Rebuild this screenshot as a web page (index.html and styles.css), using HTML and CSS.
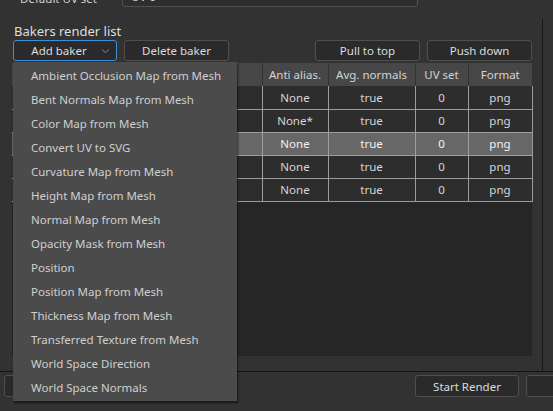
FILE: index.html
```html
<!DOCTYPE html>
<html>
<head>
<meta charset="utf-8">
<link rel="stylesheet" href="styles.css">
</head>
<body>
<div class="app">
  <div class="uvrow">
    <span class="uvlabel">Default UV set</span>
    <div class="combo"><span>UV 0</span><span class="combo-arrow"></span></div>
  </div>
  <div class="main">
    <div class="panel">
      <div class="title">Bakers render list</div>
      <div class="btnrow">
        <div class="btn btn-focus">Add baker<svg class="chev" width="9" height="6" viewBox="0 0 9 6"><path d="M1 1.5 L4.5 4.5 L8 1.5" fill="none" stroke="#8a8a8a" stroke-width="1"/></svg></div>
        <div class="btn">Delete baker</div>
        <div class="spacer"></div>
        <div class="btn">Pull to top</div>
        <div class="btn">Push down</div>
      </div>
      <div class="tablebox">
        <table class="grid">
          <thead>
            <tr><th class="c1"></th><th class="c2"></th><th class="c3">Anti alias.</th><th class="c4">Avg. normals</th><th class="c5">UV set</th><th class="c6">Format</th></tr>
          </thead>
          <tbody>
            <tr><td></td><td></td><td>None</td><td>true</td><td>0</td><td>png</td></tr>
            <tr><td></td><td></td><td>None*</td><td>true</td><td>0</td><td>png</td></tr>
            <tr class="sel"><td></td><td></td><td>None</td><td>true</td><td>0</td><td>png</td></tr>
            <tr><td></td><td></td><td>None</td><td>true</td><td>0</td><td>png</td></tr>
            <tr><td></td><td></td><td>None</td><td>true</td><td>0</td><td>png</td></tr>
          </tbody>
        </table>
      </div>
    </div>
    <div class="vline"></div>
  </div>
  <div class="bottombar">
    <div class="btn btn-left"></div>
    <div class="spacer"></div>
    <div class="btn btn-bottom">Start Render</div>
    <div class="btn btn-bottom btn-cut"></div>
  </div>

  <div class="menu">
    <div class="item">Ambient Occlusion Map from Mesh</div>
    <div class="item">Bent Normals Map from Mesh</div>
    <div class="item">Color Map from Mesh</div>
    <div class="item">Convert UV to SVG</div>
    <div class="item">Curvature Map from Mesh</div>
    <div class="item">Height Map from Mesh</div>
    <div class="item">Normal Map from Mesh</div>
    <div class="item">Opacity Mask from Mesh</div>
    <div class="item">Position</div>
    <div class="item">Position Map from Mesh</div>
    <div class="item">Thickness Map from Mesh</div>
    <div class="item">Transferred Texture from Mesh</div>
    <div class="item">World Space Direction</div>
    <div class="item">World Space Normals</div>
  </div>
</div>
</body>
</html>
```

FILE: styles.css
```css
* { box-sizing: border-box; }
html, body {
  margin: 0;
  padding: 0;
  background: #323232;
  width: 553px;
  height: 411px;
  overflow: hidden;
}
body {
  font-family: "Noto Sans", "Open Sans", sans-serif;
  font-size: 11.5px;
  color: #d6d6d6;
}
.app {
  position: relative;
  width: 553px;
  height: 411px;
  overflow: hidden;
}
.uvrow {
  display: flex;
  align-items: flex-end;
  height: 22px;
  margin-top: -14px;
}
.uvlabel {
  width: 122px;
  padding-left: 20px;
  color: #d0d0d0;
  line-height: 16px;
  height: 16px;
  margin-bottom: 1px;
}
.combo {
  width: 296px;
  height: 21px;
  border: 1px solid #505050;
  border-radius: 3px;
  background: #2e2e2e;
  display: flex;
  align-items: center;
  padding-left: 8px;
  justify-content: space-between;
  padding-right: 8px;
  margin-bottom: 1px;
}
.combo-arrow {
  width: 2px;
  height: 2px;
  background: #999;
}
.main {
  display: flex;
  height: 362px;
  margin-top: 1px;
}
.panel {
  width: 542px;
  padding-left: 12px;
  padding-right: 10px;
  display: flex;
  flex-direction: column;
}
.vline {
  width: 1px;
  margin-top: 10px;
  background: #151515;
}
.title {
  font-size: 13px;
  color: #dedede;
  padding-left: 2px;
  height: 17px;
  line-height: 17px;
  margin-top: 14px;
}
.btnrow {
  display: flex;
  gap: 7px;
  height: 21px;
  margin-left: 1px;
}
.spacer { flex: 1; }
.btn {
  width: 105px;
  height: 21px;
  border: 1px solid #4f4f4f;
  border-radius: 3px;
  background: #2a2a2a;
  display: flex;
  align-items: center;
  justify-content: center;
  color: #dcdcdc;
  position: relative;
  flex-shrink: 0;
}
.btn-focus {
  width: 104px;
  border-color: #3f8fd8;
  padding-right: 12px;
}
.chev {
  position: absolute;
  right: 6px;
  top: 7px;
}
.tablebox {
  margin-top: 2px;
  height: 293px;
  background: #262626;
}
.grid {
  border-collapse: collapse;
  table-layout: fixed;
  width: 520px;
}
.grid th {
  background: #474747;
  font-weight: normal;
  color: #d4d4d4;
  height: 23px;
  padding: 0;
  border-right: 1px solid #333;
  text-align: center;
}
.grid th:last-child { border-right: none; }
.c1 { width: 138px; }
.c2 { width: 112px; }
.c3 { width: 66px; }
.c4 { width: 87px; }
.c5 { width: 53px; }
.c6 { width: 64px; }
.grid td {
  background: #2d2d2d;
  height: 23px;
  padding: 0;
  text-align: center;
  border: 1px solid #9c9c9c;
  border-top: none;
  color: #d6d6d6;
}
.grid td:first-child { border-left: none; }
.grid tr.sel td {
  background: #676767;
  color: #f2f2f2;
}
.bottombar {
  border-top: 1px solid #141414;
  height: 40px;
  display: flex;
  align-items: flex-start;
  padding-top: 3px;
  padding-left: 4px;
  gap: 7px;
}
.btn-left { width: 105px; height: 22px; }
.btn-bottom { width: 104px; height: 22px; }
.btn-cut { margin-right: -77px; }

.menu {
  position: absolute;
  left: 13px;
  top: 62px;
  width: 224px;
  height: 339px;
  background: #4b4b4b;
  box-shadow: 1px 2px 2px rgba(0,0,0,0.55);
  padding-top: 2px;
}
.item {
  height: 24px;
  line-height: 24px;
  padding-left: 18px;
  color: #cfcfcf;
  white-space: nowrap;
}
```
